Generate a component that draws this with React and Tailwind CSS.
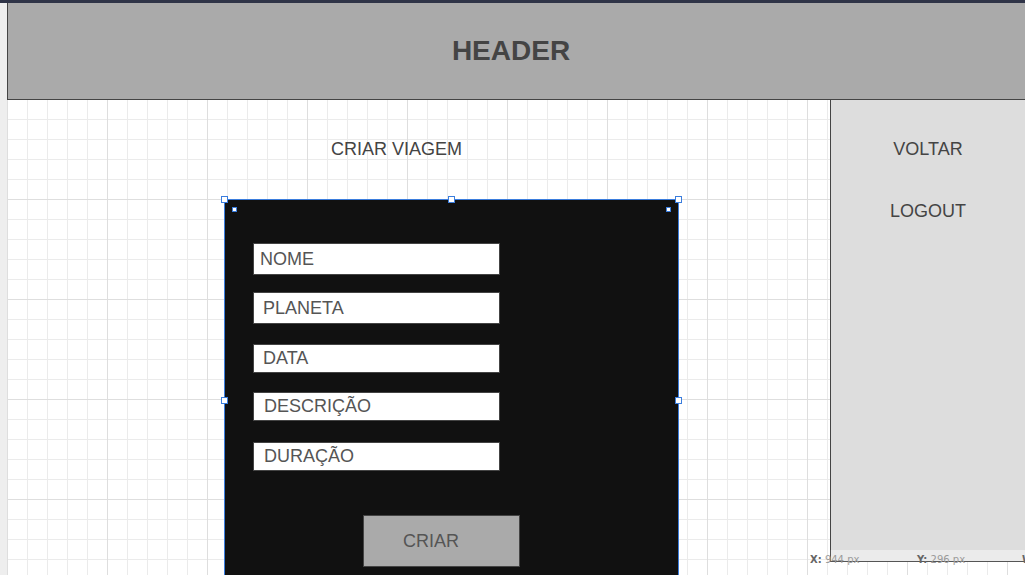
import React from "react";

const fields = [
  { label: "NOME", box: "h-[32px]", pad: "pl-[6px]", gap: "" },
  { label: "PLANETA", box: "h-[32px]", pad: "pl-[9px]", gap: "mt-[17px]" },
  { label: "DATA", box: "h-[29px]", pad: "pl-[9px]", gap: "mt-[20px]" },
  { label: "DESCRIÇÃO", box: "h-[29px]", pad: "pl-[10px]", gap: "mt-[19px]" },
  { label: "DURAÇÃO", box: "h-[29px]", pad: "pl-[10px]", gap: "mt-[21px]" },
];

const Handle = ({ className }) => (
  <span
    className={`absolute w-[7px] h-[7px] bg-white border border-[#3b7ddd] ${className}`}
  />
);

const SmallHandle = ({ className }) => (
  <span
    className={`absolute w-[5px] h-[5px] bg-white border-[1.5px] border-[#3b7ddd] ${className}`}
  />
);

export default function App() {
  return (
    <div className="relative w-[1025px] h-[575px] overflow-hidden bg-white font-['Liberation_Sans',Arial,sans-serif]">
      <div className="h-[3px] bg-[#2f3447]" />

      <div className="flex h-[572px]">
        <div className="w-[7px] bg-[#eeeeee]" />

        <div className="flex-1 flex flex-col">
          {/* Header */}
          <header className="h-[97px] shrink-0 bg-[#aaaaaa] border-l border-b border-[#444] flex items-center justify-center pr-[11px]">
            <h1 className="text-[28px] font-bold text-[#444] leading-none">
              HEADER
            </h1>
          </header>

          {/* Canvas */}
          <div className="flex-1 flex bg-[linear-gradient(to_right,#dedede_1px,transparent_1px),linear-gradient(to_bottom,#dedede_1px,transparent_1px),linear-gradient(to_right,#ebebeb_1px,transparent_1px),linear-gradient(to_bottom,#ebebeb_1px,transparent_1px)] bg-[size:100px_100px,100px_100px,20px_20px,20px_20px] bg-[position:0_-1px]">
            <main className="flex-1 flex flex-col">
              <p className="ml-[324px] pt-[39px] text-[18px] leading-[20px] text-[#444]">
                CRIAR VIAGEM
              </p>

              <div className="relative ml-[217px] mt-[40px] w-[455px] h-[420px] shrink-0 border border-[#3b7ddd] bg-[#111111] pt-[43px] pl-[28px] flex flex-col">
                <Handle className="-left-[4px] -top-[4px]" />
                <Handle className="left-[223px] -top-[4px]" />
                <Handle className="left-[450px] -top-[4px]" />
                <Handle className="-left-[4px] top-[197px]" />
                <Handle className="left-[450px] top-[197px]" />
                <SmallHandle className="left-[7px] top-[7px]" />
                <SmallHandle className="left-[441px] top-[7px]" />

                {fields.map((f) => (
                  <div
                    key={f.label}
                    className={`w-[247px] ${f.box} ${f.gap} ${f.pad} shrink-0 bg-white border border-[#444] flex items-center text-[18px] text-[#555]`}
                  >
                    {f.label}
                  </div>
                ))}

                <button className="ml-[110px] mt-[44px] w-[157px] h-[52px] shrink-0 bg-[#aaaaaa] border border-[#444] flex items-center pl-[39px] text-[18px] text-[#555]">
                  CRIAR
                </button>
              </div>
            </main>

            {/* Sidebar */}
            <aside className="w-[195px] flex flex-col">
              <div className="h-[450px] bg-[#dddddd] border-l border-[#444] flex flex-col items-center pt-[39px] text-[18px] leading-[20px] text-[#444]">
                <span>VOLTAR</span>
                <span className="mt-[42px]">LOGOUT</span>
              </div>
              <div className="h-[12px] bg-[#ebebeb] border-l border-b border-[#555]" />
            </aside>
          </div>
        </div>
      </div>

      {/* coordinates readout */}
      <div className="absolute left-[810px] top-[555px] flex text-[10px] leading-[10px] text-[#9a9a9a] font-['DejaVu_Sans',sans-serif]">
        <span className="w-[107px]">
          <b className="text-[#666]">X:</b> 944 px
        </span>
        <span className="w-[105px]">
          <b className="text-[#666]">Y:</b> 296 px
        </span>
        <b className="text-[#666]">W</b>
      </div>
    </div>
  );
}
